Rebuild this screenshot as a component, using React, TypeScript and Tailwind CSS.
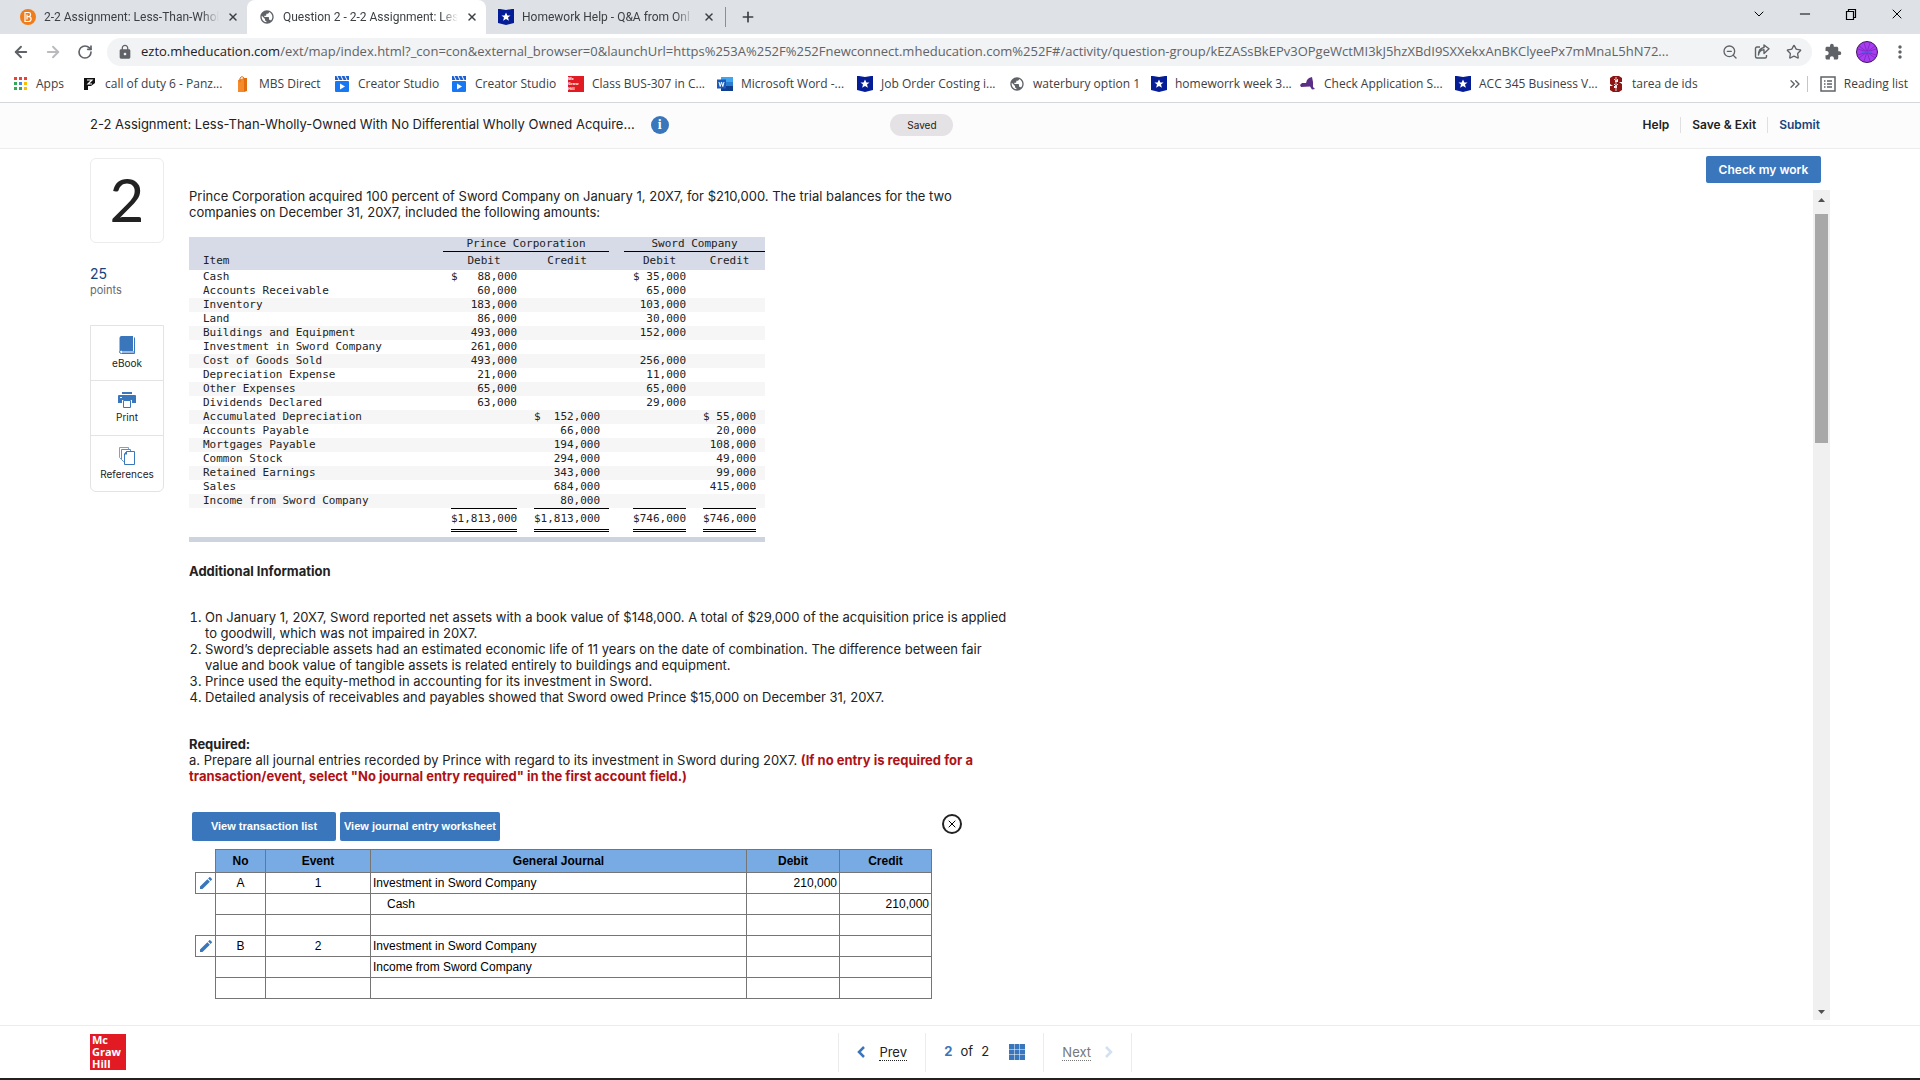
import type { ReactNode } from 'react'
import {
  ArrowLeft,
  ArrowRight,
  ChevronDown,
  ChevronsRight,
  Minus,
  Plus,
  RotateCw,
  Star,
  X,
  ZoomOut,
} from 'lucide-react'
import { MdExtension, MdLock, MdModeEdit, MdMoreVert, MdPublic } from 'react-icons/md'

function ShieldIcon() {
  return (
    <svg viewBox="0 0 16 16" className="size-4 shrink-0">
      <path d="M0 0h2l6 1 6-1h2v14l-8 2-8-2z" fill="#041c96" />
      <path d="M8 3.6l1.4 3h3.1L10 8.6l.9 3.2L8 10l-2.900 1.800.9-3.200-2.500-2h3.100z" fill="#fff" />
    </svg>
  )
}

function BartlebyIcon() {
  return (
    <svg viewBox="0 0 16 16" className="size-4 shrink-0">
      <circle cx="8" cy="8" r="8" fill="#f07d1b" />
      <path
        d="M5 3.500h3.600c2.500 0 2.700 3.700.4 4.200 3 .4 2.700 4.800-.4 4.800H5zM7 5.500v5M7 7.700h2"
        fill="none"
        stroke="#fff"
        strokeWidth="1.200"
      />
    </svg>
  )
}

function AppsIcon() {
  const colors = ['#ea4335', '#ea4335', '#ea4335', '#34a853', '#4285f4', '#fbbc05', '#34a853', '#34a853', '#fbbc05']
  return (
    <svg viewBox="0 0 16 16" className="size-4 shrink-0">
      {colors.map((color, i) => (
        <rect key={i} x={2 + (i % 3) * 5} y={1 + Math.floor(i / 3) * 5} width="3" height="3" fill={color} />
      ))}
    </svg>
  )
}

function PanzerIcon() {
  return (
    <svg viewBox="0 0 16 16" className="size-4 shrink-0">
      <path d="M3 2h11v5l-4 3H7v4H3z" fill="#111" />
      <path d="M6 4h5L7 8h4" fill="none" stroke="#fff" strokeWidth="1.200" />
    </svg>
  )
}

function BagIcon() {
  return (
    <svg viewBox="0 0 16 16" className="size-4 shrink-0">
      <path d="M3 4l6-2v14H3z" fill="#f58a2b" />
      <path d="M9 2h3v13l-3 1z" fill="#e06d10" />
      <path d="M5 6V2q2-3 4 0v2" fill="none" stroke="#e06d10" />
    </svg>
  )
}

function StudioIcon() {
  return (
    <svg viewBox="0 0 16 16" className="size-4 shrink-0">
      <path d="M1 0h14v4H1z" fill="#1c5fd0" />
      <path d="M3 0l2 4M7 0l2 4M11 0l2 4" stroke="#fff" />
      <rect x="1" y="5" width="14" height="11" rx="1" fill="#1877f2" />
      <path d="M6 7.500l5 3-5 3z" fill="#fff" />
    </svg>
  )
}

function WordIcon() {
  return (
    <svg viewBox="0 0 16 16" className="size-4 shrink-0">
      <path d="M4 1h12v5H4z" fill="#41a5ee" />
      <path d="M4 6h12v4H4z" fill="#2b7cd3" />
      <path d="M4 10h12v5H4z" fill="#103f91" />
      <rect y="3.500" width="9" height="9" fill="#185abd" />
      <path d="M2 6l1.200 4.500L4.500 6l1.300 4.500L7 6" fill="none" stroke="#fff" />
    </svg>
  )
}

function NewYorkIcon() {
  return (
    <svg viewBox="0 0 16 16" className="size-4 shrink-0">
      <path d="M0 9l2-2h4l1-3 2-2 3-1 1 5v5l2 2-3 .5-2-3-9 .5z" fill="#5b2f87" />
    </svg>
  )
}

function StanfordIcon() {
  return (
    <svg viewBox="0 0 16 16" className="size-4 shrink-0">
      <path d="M5 0h6l3 2v4h-4V4H7v2h4l3 2v6l-3 2H5l-3-2v-4h4v2h3v-2H5L2 8V2z" fill="#8c1515" />
      <path d="M8 1v14M6 3l2 2 2-2M6 8l2 2 2-2" stroke="#e9d6d6" fill="none" />
    </svg>
  )
}

function McGrawHillMark({ className }: { className: string }) {
  return (
    <span className={`flex shrink-0 flex-col bg-[#e21a23] font-['Open_Sans',sans-serif] font-bold text-white ${className}`}>
      <span>Mc</span>
      <span>Graw</span>
      <span>Hill</span>
    </span>
  )
}

function ReadingListIcon() {
  return (
    <svg viewBox="0 0 16 16" className="size-4 shrink-0" fill="none" stroke="#5f6368" strokeWidth="1.500">
      <rect x="1" y="1" width="14" height="14" />
      <path d="M4 5h1.500M4 8h1.500M4 11h1.500M7 5h5M7 8h5M7 11h5" />
    </svg>
  )
}

function ShareIcon() {
  return (
    <svg viewBox="0 0 16 16" className="size-4" fill="none" stroke="#5f6368" strokeWidth="1.400">
      <path d="M6 3H3Q1.500 3 1.500 4.500v8Q1.500 14 3 14h8q1.500 0 1.500-1.500V11" />
      <path d="M4.500 11q.5-5 5.500-5.200V9.500l5-4.700L10 1v2.500Q4.500 4.500 4.500 11z" strokeLinejoin="round" />
    </svg>
  )
}

function RestoreIcon() {
  return (
    <svg viewBox="0 0 16 16" className="size-4" fill="none" stroke="#000" strokeWidth="1.200">
      <path d="M3.500 5.500h7v8h-7zM5.500 5.500v-2h7v8h-2" />
    </svg>
  )
}

function BookIcon() {
  return (
    <svg viewBox="0 0 16 18" className="h-[18px] w-4">
      <path d="M2.500 0H14v14H2.500Q1 14 .5 15V2Q.5 0 2.500 0z" fill="#3a76bb" />
      <path d="M15.500 1.500v16h-13q-2 0-2-1.700T2.500 14.500H14M3 16h12" fill="none" stroke="#3a76bb" />
    </svg>
  )
}

function PrinterIcon() {
  return (
    <svg viewBox="0 0 18 16" className="h-4 w-[18px]">
      <path d="M4 0h10v2H4zM1 3h16q1 0 1 1v7h-4V8H4v3H0V4q0-1 1-1z" fill="#3a76bb" />
      <path d="M5.500 8.500h7v7h-7z" fill="#fff" stroke="#3a76bb" />
      <rect x="2" y="5" width="2" height="1" fill="#fff" />
    </svg>
  )
}

function PagesIcon() {
  return (
    <svg viewBox="0 0 16 18" className="h-[18px] w-4" fill="#fff" stroke="#3a76bb">
      <path d="M.5.500h9v12h-7l-2-2z" stroke="#7ba3d2" />
      <path d="M2.500 2.500h9v12h-7l-2-2z" stroke="#5b8cc6" />
      <path d="M7.500 4.500h8v13h-10V7z" />
      <path d="M5 7.500h3V4z" fill="#3a76bb" stroke="none" />
    </svg>
  )
}

function GridIcon() {
  return (
    <svg viewBox="0 0 16 16" className="size-4" fill="#3a76bb">
      {[0, 1, 2, 3, 4, 5, 6, 7, 8].map((i) => (
        <rect key={i} x={(i % 3) * 5.500} y={Math.floor(i / 3) * 5.500} width="5" height="5" />
      ))}
    </svg>
  )
}

const bookmarks: { label: string; icon: ReactNode; width: string }[] = [
  { label: 'Apps', icon: <AppsIcon />, width: 'w-[69px]' },
  { label: 'call of duty 6 - Panz...', icon: <PanzerIcon />, width: 'w-[154px]' },
  { label: 'MBS Direct', icon: <BagIcon />, width: 'w-[99px]' },
  { label: 'Creator Studio', icon: <StudioIcon />, width: 'w-[117px]' },
  { label: 'Creator Studio', icon: <StudioIcon />, width: 'w-[117px]' },
  { label: 'Class BUS-307 in C...', icon: <McGrawHillMark className="size-4 text-[4px] leading-[5px]" />, width: 'w-[149px]' },
  { label: 'Microsoft Word -...', icon: <WordIcon />, width: 'w-[140px]' },
  { label: 'Job Order Costing i...', icon: <ShieldIcon />, width: 'w-[152px]' },
  { label: 'waterbury option 1', icon: <MdPublic className="size-4 shrink-0 text-[#5f6368]" />, width: 'w-[142px]' },
  { label: 'homeworrk week 3...', icon: <ShieldIcon />, width: 'w-[149px]' },
  { label: 'Check Application S...', icon: <NewYorkIcon />, width: 'w-[155px]' },
  { label: 'ACC 345 Business V...', icon: <ShieldIcon />, width: 'w-[153px]' },
  { label: 'tarea de ids', icon: <StanfordIcon />, width: 'w-[100px]' },
]

function Tab({ icon, title, active = false }: { icon: ReactNode; title: string; active?: boolean }) {
  return (
    <div
      className={`flex h-[34px] w-[239px] items-center gap-2 pr-2 pl-3 ${active ? 'rounded-t-lg bg-white' : ''}`}
    >
      {icon}
      <span className="flex-1 mask-r-from-90% font-['Roboto','Open_Sans',sans-serif] whitespace-nowrap">{title}</span>
      <button aria-label="Close tab" className="flex size-4 items-center justify-center">
        <X className="size-3" strokeWidth={3} />
      </button>
    </div>
  )
}

function BrowserChrome() {
  return (
    <div className="shrink-0 border-b border-[#d5d7da] font-['Open_Sans','Noto_Sans',sans-serif] text-xs text-[#3c4043]">
      <div className="flex h-[34px] items-center bg-[#dee1e6] pl-2">
        <Tab icon={<BartlebyIcon />} title="2-2 Assignment: Less-Than-Whol" />
        <Tab icon={<MdPublic className="size-4 shrink-0 text-[#5f6368]" />} title="Question 2 - 2-2 Assignment: Les" active />
        <Tab icon={<ShieldIcon />} title="Homework Help - Q&A from Onl" />
        <span className="h-5 w-px bg-[#8b8f94]" />
        <button aria-label="New tab" className="ml-3.5">
          <Plus className="size-4" strokeWidth={2.500} />
        </button>
        <div className="ml-auto flex h-full items-start gap-[30px] pt-1.5 pr-[15px] text-black">
          <button aria-label="Search tabs">
            <ChevronDown className="size-4" strokeWidth={1.500} />
          </button>
          <button aria-label="Minimize">
            <Minus className="size-4" strokeWidth={1.500} />
          </button>
          <button aria-label="Restore">
            <RestoreIcon />
          </button>
          <button aria-label="Close">
            <X className="size-4" strokeWidth={1.500} />
          </button>
        </div>
      </div>

      <div className="flex h-9 items-center bg-white pr-2.5 pl-3 text-[#5f6368]">
        <button aria-label="Back">
          <ArrowLeft className="size-[18px]" strokeWidth={2.500} />
        </button>
        <button aria-label="Forward" className="ml-3.5 text-[#b9bbbe]">
          <ArrowRight className="size-[18px]" strokeWidth={2.500} />
        </button>
        <button aria-label="Reload" className="ml-[15px]">
          <RotateCw className="size-4" strokeWidth={2.500} />
        </button>
        <div className="ml-3.5 flex h-7 min-w-0 flex-1 items-center rounded-full bg-[#f1f3f4] px-2.5">
          <MdLock className="size-4 shrink-0" />
          <span className="ml-2 flex-1 truncate text-[13px]">
            <span className="text-[#202124]">ezto.mheducation.com</span>
            /ext/map/index.html?_con=con&amp;external_browser=0&amp;launchUrl=https%253A%252F%252Fnewconnect.mheducation.com%252F#/activity/question-group/kEZASsBkEPv3OPgeWctMI3kJ5hzXBdI9SXXekxAnBKClyeePx7mMnaL5hN72...
          </span>
          <div className="ml-3 flex shrink-0 gap-4">
            <ZoomOut className="size-4" />
            <ShareIcon />
            <Star className="size-4" />
          </div>
        </div>
        <MdExtension className="ml-3 size-[18px]" />
        <svg viewBox="0 0 22 22" className="ml-3.5 size-[22px]">
          <circle cx="11" cy="11" r="10.500" fill="#a83cf0" stroke="#3f1560" />
          <path d="M2 8l18 6M2 14l18-6M8 2l6 18M14 2L8 20M3 5l16 12M3 17L19 5" stroke="#6d1fae" strokeWidth=".6" />
          <path d="M6 11h10" stroke="#5a5be8" strokeWidth="1.500" />
        </svg>
        <button aria-label="Menu" className="ml-3">
          <MdMoreVert className="size-5" />
        </button>
      </div>

      <div className="flex h-8 items-center bg-white pr-3 pb-1 pl-3">
        {bookmarks.map((b, i) => (
          <a key={i} href="#" className={`flex shrink-0 items-center gap-2 whitespace-nowrap ${b.width}`}>
            {b.icon}
            {b.label}
          </a>
        ))}
        <ChevronsRight className="ml-auto size-4 text-[#5f6368]" />
        <span className="mr-3 ml-1 h-4 w-px bg-[#c4c7ca]" />
        <a href="#" className="flex items-center gap-2">
          <ReadingListIcon />
          Reading list
        </a>
      </div>
    </div>
  )
}

function PageHeader() {
  return (
    <header className="flex h-[46px] shrink-0 items-center border-b border-[#ececec] bg-[#fcfcfc] px-[90px] pb-0.5 text-xs">
      <div className="flex w-[46%] items-center gap-4">
        <h1 className="text-[13px] whitespace-nowrap">
          2-2 Assignment: Less-Than-Wholly-Owned With No Differential Wholly Owned Acquire...
        </h1>
        <button
          aria-label="Assignment information"
          className="flex size-[18px] items-center justify-center rounded-full bg-[#3a76bb] font-['Liberation_Serif',serif] text-sm font-bold text-white"
        >
          i
        </button>
      </div>
      <span className="w-[63px] rounded-full bg-[#e4e2e5] py-1 text-center text-[10px] leading-[14px]">Saved</span>
      <nav className="mr-2.5 ml-auto flex items-center font-semibold">
        <a href="#" className="px-[11px]">Help</a>
        <a href="#" className="border-l border-[#e0e0e0] px-[11px]">Save &amp; Exit</a>
        <a href="#" className="border-l border-[#e0e0e0] pl-[11px] text-[#16447f]">Submit</a>
      </nav>
    </header>
  )
}

function Sidebar() {
  const tools = [
    { label: 'eBook', icon: <BookIcon /> },
    { label: 'Print', icon: <PrinterIcon /> },
    { label: 'References', icon: <PagesIcon /> },
  ]
  return (
    <aside className="w-[74px] shrink-0 pt-[9px]">
      <div className="flex h-[85px] items-center justify-center rounded-md border border-[#ececec] pb-1 font-['Lato',sans-serif] text-[60px]">
        2
      </div>
      <p className="mt-[23px] text-sm leading-4 text-[#16447f]">25</p>
      <p className="text-[11px] leading-4 text-[#6a6a6a]">points</p>
      <div className="mt-[27px] divide-y divide-[#e3e3e3] rounded-b-md border border-[#e3e3e3]">
        {tools.map((tool) => (
          <button
            key={tool.label}
            className="flex h-[55px] w-full flex-col items-center justify-center gap-0.5 text-[10px] leading-[14px]"
          >
            {tool.icon}
            {tool.label}
          </button>
        ))}
      </div>
    </aside>
  )
}

// item, prince debit, prince credit, sword debit, sword credit
const trialBalance = [
  ['Cash', '$   88,000', '', '$ 35,000', ''],
  ['Accounts Receivable', '60,000', '', '65,000', ''],
  ['Inventory', '183,000', '', '103,000', ''],
  ['Land', '86,000', '', '30,000', ''],
  ['Buildings and Equipment', '493,000', '', '152,000', ''],
  ['Investment in Sword Company', '261,000', '', '', ''],
  ['Cost of Goods Sold', '493,000', '', '256,000', ''],
  ['Depreciation Expense', '21,000', '', '11,000', ''],
  ['Other Expenses', '65,000', '', '65,000', ''],
  ['Dividends Declared', '63,000', '', '29,000', ''],
  ['Accumulated Depreciation', '', '$  152,000', '', '$ 55,000'],
  ['Accounts Payable', '', '66,000', '', '20,000'],
  ['Mortgages Payable', '', '194,000', '', '108,000'],
  ['Common Stock', '', '294,000', '', '49,000'],
  ['Retained Earnings', '', '343,000', '', '99,000'],
  ['Sales', '', '684,000', '', '415,000'],
  ['Income from Sword Company', '', '80,000', '', ''],
]

function TrialBalance() {
  const total = 'border-t border-b-3 border-t-black border-b-black [border-bottom-style:double]'
  return (
    <table className="mt-[17px] w-[576px] table-fixed border-separate border-spacing-0 border-b-[5px] border-[#ced3e0] font-['DejaVu_Sans_Mono',monospace] text-[11px] leading-[14px] whitespace-pre">
      <colgroup>
        <col className="w-[254px]" />
        <col className="w-2" />
        <col className="w-[66px]" />
        <col className="w-[17px]" />
        <col className="w-[75px]" />
        <col className="w-[15px]" />
        <col className="w-[9px]" />
        <col className="w-[53px]" />
        <col className="w-[17px]" />
        <col className="w-[53px]" />
        <col className="w-[9px]" />
      </colgroup>
      <thead className="bg-[#d6dbe7]">
        <tr>
          <th />
          <th colSpan={4} className="border-b border-black font-normal">Prince Corporation</th>
          <th />
          <th colSpan={5} className="border-b border-black font-normal">Sword Company</th>
        </tr>
        <tr className="h-[18px]">
          <th className="pl-3.5 text-left font-normal">Item</th>
          <th />
          <th className="font-normal">Debit</th>
          <th />
          <th className="pr-[9px] font-normal">Credit</th>
          <th colSpan={2} />
          <th className="font-normal">Debit</th>
          <th />
          <th className="font-normal">Credit</th>
          <th />
        </tr>
      </thead>
      <tbody className="text-right">
        {trialBalance.map(([item, princeDebit, princeCredit, swordDebit, swordCredit], i) => (
          <tr key={item} className={`h-3.5 ${i > 0 && i % 2 === 0 ? 'bg-[#f6f6f6]' : ''}`}>
            <td className="pl-3.5 text-left">{item}</td>
            <td />
            <td>{princeDebit}</td>
            <td />
            <td className="pr-[9px]">{princeCredit}</td>
            <td colSpan={2} />
            <td>{swordDebit}</td>
            <td />
            <td>{swordCredit}</td>
            <td />
          </tr>
        ))}
        <tr className="h-6">
          <td colSpan={2} />
          <td className={total}>$1,813,000</td>
          <td />
          <td className={`pr-[9px] ${total}`}>$1,813,000</td>
          <td colSpan={2} />
          <td className={total}>$746,000</td>
          <td />
          <td className={total}>$746,000</td>
          <td />
        </tr>
        <tr className="h-[5px]">
          <td colSpan={11} />
        </tr>
      </tbody>
    </table>
  )
}

const journal = [
  { no: 'A', event: '1', account: 'Investment in Sword Company', debit: '210,000' },
  { account: 'Cash', indent: true, credit: '210,000' },
  {},
  { no: 'B', event: '2', account: 'Investment in Sword Company' },
  { account: 'Income from Sword Company' },
  {},
] as { no?: string; event?: string; account?: string; indent?: boolean; debit?: string; credit?: string }[]

function Journal() {
  const cell = 'border border-[#757575] px-0.5'
  return (
    <div className="mt-7 ml-[3px] w-[770px] font-['Liberation_Sans',Arial,sans-serif] text-xs text-black">
      <div className="flex items-start justify-between">
        <div className="flex gap-1">
          <button className="h-[29px] w-36 rounded-xs bg-[#3a76bb] text-[11px] font-bold text-white">
            View transaction list
          </button>
          <button className="h-[29px] w-40 rounded-xs bg-[#3a76bb] text-[11px] font-bold whitespace-nowrap text-white">
            View journal entry worksheet
          </button>
        </div>
        <button
          aria-label="Close"
          className="mt-0.5 flex size-5 items-center justify-center rounded-full border-2 border-[#222]"
        >
          <X className="size-3" />
        </button>
      </div>
      <table className="mt-2 ml-[3px] w-[737px] table-fixed border-collapse">
        <colgroup>
          <col className="w-5" />
          <col className="w-[50px]" />
          <col className="w-[105px]" />
          <col />
          <col className="w-[93px]" />
          <col className="w-[92px]" />
        </colgroup>
        <thead>
          <tr className="h-[23px]">
            <td />
            <th className={`bg-[#78abe4] ${cell}`}>No</th>
            <th className={`bg-[#78abe4] ${cell}`}>Event</th>
            <th className={`bg-[#78abe4] ${cell}`}>General Journal</th>
            <th className={`bg-[#78abe4] ${cell}`}>Debit</th>
            <th className={`bg-[#78abe4] ${cell}`}>Credit</th>
          </tr>
        </thead>
        <tbody>
          {journal.map((row, i) => (
            <tr key={i} className="h-[21px]">
              {row.no ? (
                <td className="border border-[#757575]">
                  <button aria-label={`Edit entry ${row.no}`} className="flex w-full justify-center">
                    <MdModeEdit className="size-4 text-[#3a76bb]" />
                  </button>
                </td>
              ) : (
                <td />
              )}
              <td className={`text-center ${cell}`}>{row.no}</td>
              <td className={`text-center ${cell}`}>{row.event}</td>
              <td className={cell}>
                <span className={row.indent ? 'pl-3.5' : ''}>{row.account}</span>
              </td>
              <td className={`text-right ${cell}`}>{row.debit}</td>
              <td className={`text-right ${cell}`}>{row.credit}</td>
            </tr>
          ))}
        </tbody>
      </table>
    </div>
  )
}

function Question() {
  return (
    <main className="ml-[25px] min-w-0 flex-1 pt-[39px] text-[13px] leading-4 whitespace-nowrap">
      <p>
        Prince Corporation acquired 100 percent of Sword Company on January 1, 20X7, for $210,000. The trial balances for the two
        <br />
        companies on December 31, 20X7, included the following amounts:
      </p>
      <TrialBalance />
      <h2 className="mt-[21px] font-bold">Additional Information</h2>
      <ol className="mt-[30px] ml-4 list-outside list-decimal">
        <li>
          On January 1, 20X7, Sword reported net assets with a book value of $148,000. A total of $29,000 of the acquisition price is applied
          <br />
          to goodwill, which was not impaired in 20X7.
        </li>
        <li>
          Sword’s depreciable assets had an estimated economic life of 11 years on the date of combination. The difference between fair
          <br />
          value and book value of tangible assets is related entirely to buildings and equipment.
        </li>
        <li>Prince used the equity-method in accounting for its investment in Sword.</li>
        <li>Detailed analysis of receivables and payables showed that Sword owed Prince $15,000 on December 31, 20X7.</li>
      </ol>
      <h2 className="mt-[31px] font-bold">Required:</h2>
      <p>
        a. Prepare all journal entries recorded by Prince with regard to its investment in Sword during 20X7.{' '}
        <strong className="text-[#b01116]">
          (If no entry is required for a
          <br />
          transaction/event, select "No journal entry required" in the first account field.)
        </strong>
      </p>
      <Journal />
    </main>
  )
}

function ScrollRail() {
  return (
    <div className="flex min-h-0 w-[124px] shrink-0 flex-col items-end pt-[7px] pb-[5px]">
      <button className="mr-[9px] h-[27px] w-[115px] rounded-xs bg-[#3a76bb] text-xs font-semibold text-white">
        Check my work
      </button>
      <div className="mt-[7px] flex w-[17px] flex-1 flex-col items-center bg-[#f0f0f0] py-1.5">
        <svg viewBox="0 0 7 4" className="mt-0.5 h-1 w-[7px] shrink-0" fill="#505050">
          <path d="M0 4h7L3.500 0z" />
        </svg>
        <div className="mt-3 h-[28%] w-[13px] bg-[#a8a8a8]" />
        <svg viewBox="0 0 7 4" className="mt-auto h-1 w-[7px] shrink-0" fill="#505050">
          <path d="M0 0h7L3.500 4z" />
        </svg>
      </div>
    </div>
  )
}

function Footer() {
  return (
    <footer className="flex h-[55px] shrink-0 items-center border-t border-b-2 border-t-[#ececec] border-b-[#222] px-[90px] text-[13px]">
      <div className="w-[43%]">
        <McGrawHillMark className="size-9 pl-0.5 text-[11px] leading-3" />
      </div>
      <nav className="flex h-[39px] items-stretch divide-x divide-[#ececec] border-x border-[#ececec]">
        <a href="#" className="flex w-[87px] items-center justify-center gap-3.5">
          <svg viewBox="0 0 8 12" className="h-3 w-2" fill="none" stroke="#3a76bb" strokeWidth="2.500">
            <path d="M7 1L2 6l5 5" />
          </svg>
          <span className="border-b border-dotted border-[#222] leading-4">Prev</span>
        </a>
        <div className="flex w-[118px] items-center justify-center gap-5">
          <span className="flex gap-2">
            <b className="text-[#3a76bb]">2</b>
            <span>of</span>
            <span>2</span>
          </span>
          <button aria-label="Question list">
            <GridIcon />
          </button>
        </div>
        <a href="#" className="flex w-[87px] items-center justify-center gap-3.5 text-[#777]">
          <span className="border-b border-dotted border-[#777] leading-4">Next</span>
          <svg viewBox="0 0 8 12" className="h-3 w-2" fill="none" stroke="#d3e0f0" strokeWidth="2.500">
            <path d="M1 1l5 5-5 5" />
          </svg>
        </a>
      </nav>
    </footer>
  )
}

export default function App() {
  return (
    <div className="flex h-screen flex-col overflow-hidden bg-white font-['Inter','Open_Sans',sans-serif] text-[#222]">
      <BrowserChrome />
      <PageHeader />
      <div className="flex min-h-0 flex-1 px-[90px]">
        <Sidebar />
        <Question />
        <ScrollRail />
      </div>
      <Footer />
    </div>
  )
}
